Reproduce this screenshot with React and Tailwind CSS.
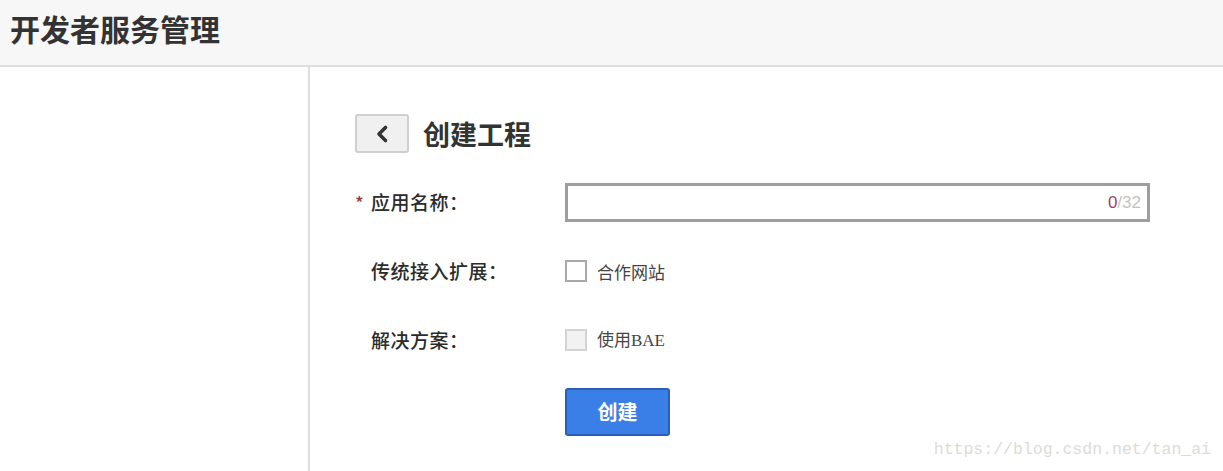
import React from 'react';

const labelFont = { fontFamily: '"Liberation Serif", "Noto Sans CJK SC", serif' };

const Row = ({ label, required, children, className }) => (
  <div className={`flex items-center ${className}`}>
    <div className="w-[210px] flex items-center text-[19px] font-medium text-[#2b2b2b]">
      <span className={`w-[16px] text-[#9a3b3b] text-[18px] ${required ? '' : 'invisible'}`}>*</span>
      <span className="tracking-[0.5px]">{label}</span>
    </div>
    {children}
  </div>
);

export default function App() {
  return (
    <div className="w-[1223px] h-[471px] bg-white overflow-hidden flex flex-col" style={{ fontFamily: '"Noto Sans CJK SC", sans-serif' }}>
      <header className="h-[67px] shrink-0 bg-[#f7f7f7] border-b-2 border-[#dedede] flex items-center px-[10px]">
        <h1 className="text-[30px] font-bold text-[#333] leading-none -mt-[9px]">开发者服务管理</h1>
      </header>
      <div className="flex flex-1 relative">
        <aside className="w-[310px] shrink-0 border-r-2 border-[#dedede]" />
        <main className="flex-1 pl-[45px] pt-[47px]">
          <div className="flex items-center gap-[14px]">
            <button className="w-[54px] h-[39px] bg-[#f0f0f0] border-2 border-[#cfcfcf] rounded-[3px] flex items-center justify-center">
              <svg width="16" height="20" viewBox="0 0 16 20" fill="none">
                <path d="M11.5 3.5 L5 10 L11.5 16.5" stroke="#333" strokeWidth="3.6" strokeLinecap="round" strokeLinejoin="round" />
              </svg>
            </button>
            <h2 className="text-[27px] font-bold text-[#333] leading-none">创建工程</h2>
          </div>

          <Row label="应用名称：" required className="mt-[30px]">
            <div className="w-[585px] h-[39px] border-[3px] border-[#9e9e9e] flex items-center justify-end pr-[6px] text-[17px]" style={{ fontFamily: '"Liberation Sans", sans-serif' }}>
              <span className="text-[#a0406a]">0</span>
              <span className="text-[#c2c2c2]">/32</span>
            </div>
          </Row>

          <Row label="传统接入扩展：" className="mt-[35px]">
            <div className="flex items-center gap-[10px]">
              <span className="w-[22px] h-[22px] border-2 border-[#a8a8a8] bg-white" />
              <span className="text-[17px] text-[#444]">合作网站</span>
            </div>
          </Row>

          <Row label="解决方案：" className="mt-[40px]">
            <div className="flex items-center gap-[10px]">
              <span className="w-[22px] h-[22px] border-2 border-[#d4d4d4] bg-[#f2f2f2]" />
              <span className="text-[17px] text-[#444]">使用<span style={labelFont}>BAE</span></span>
            </div>
          </Row>

          <div className="mt-[34px] ml-[210px]">
            <button className="w-[105px] h-[48px] bg-[#3a7ee8] border-2 border-[#2b5fb5] rounded-[3px] text-white text-[20px] font-bold">创建</button>
          </div>
        </main>
        <div className="absolute right-[12px] bottom-[8px] text-[16.5px] text-[#dcdcd6]" style={{ fontFamily: '"Liberation Mono", monospace' }}>https://blog.csdn.net/tan_ai</div>
      </div>
    </div>
  );
}
